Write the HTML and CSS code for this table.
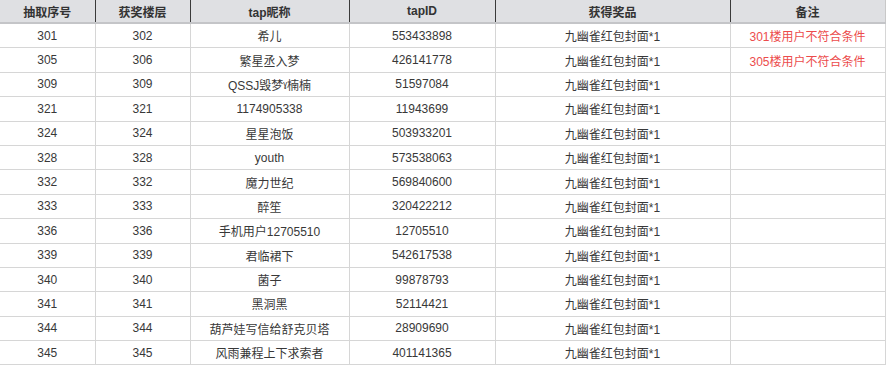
FILE: index.html
```html
<!DOCTYPE html>
<html lang="zh-CN">
<head>
    <meta charset="UTF-8">
    <meta name="viewport" content="width=device-width, initial-scale=1.0">
    <title>获奖名单</title>
    <link rel="stylesheet" href="styles.css">
</head>
<body>
    <table class="prize-table">
        <colgroup>
            <col class="col-no">
            <col class="col-floor">
            <col class="col-name">
            <col class="col-id">
            <col class="col-prize">
            <col class="col-note">
        </colgroup>
        <thead>
            <tr>
                <th>抽取序号</th>
                <th>获奖楼层</th>
                <th>tap昵称</th>
                <th>tapID</th>
                <th>获得奖品</th>
                <th>备注</th>
            </tr>
        </thead>
        <tbody>
            <tr><td>301</td><td>302</td><td>希儿</td><td>553433898</td><td>九幽雀红包封面*1</td><td class="note-warn">301楼用户不符合条件</td></tr>
            <tr><td>305</td><td>306</td><td>繁星丞入梦</td><td>426141778</td><td>九幽雀红包封面*1</td><td class="note-warn">305楼用户不符合条件</td></tr>
            <tr><td>309</td><td>309</td><td>QSSJ毁梦ˠ楠楠</td><td>51597084</td><td>九幽雀红包封面*1</td><td></td></tr>
            <tr><td>321</td><td>321</td><td>1174905338</td><td>11943699</td><td>九幽雀红包封面*1</td><td></td></tr>
            <tr><td>324</td><td>324</td><td>星星泡饭</td><td>503933201</td><td>九幽雀红包封面*1</td><td></td></tr>
            <tr><td>328</td><td>328</td><td>youth</td><td>573538063</td><td>九幽雀红包封面*1</td><td></td></tr>
            <tr><td>332</td><td>332</td><td>魔力世纪</td><td>569840600</td><td>九幽雀红包封面*1</td><td></td></tr>
            <tr><td>333</td><td>333</td><td>醉笙</td><td>320422212</td><td>九幽雀红包封面*1</td><td></td></tr>
            <tr><td>336</td><td>336</td><td>手机用户12705510</td><td>12705510</td><td>九幽雀红包封面*1</td><td></td></tr>
            <tr><td>339</td><td>339</td><td>君临裙下</td><td>542617538</td><td>九幽雀红包封面*1</td><td></td></tr>
            <tr><td>340</td><td>340</td><td>菌子</td><td>99878793</td><td>九幽雀红包封面*1</td><td></td></tr>
            <tr><td>341</td><td>341</td><td>黑洞黑</td><td>52114421</td><td>九幽雀红包封面*1</td><td></td></tr>
            <tr><td>344</td><td>344</td><td>葫芦娃写信给舒克贝塔</td><td>28909690</td><td>九幽雀红包封面*1</td><td></td></tr>
            <tr><td>345</td><td>345</td><td>风雨兼程上下求索者</td><td>401141365</td><td>九幽雀红包封面*1</td><td></td></tr>
        </tbody>
    </table>
</body>
</html>
```

FILE: styles.css
```css
body {
    margin: 0;
    background: #ffffff;
    font-family: "Liberation Sans", "Noto Sans CJK SC", sans-serif;
    font-size: 12px;
    color: #383838;
}

/* Prize table */
.prize-table {
    width: 885px;
    table-layout: fixed;
    border-collapse: collapse;
}

.col-no { width: 95px; }
.col-floor { width: 95px; }
.col-name { width: 159px; }
.col-id { width: 146px; }
.col-prize { width: 235px; }
.col-note { width: 155px; }

.prize-table th {
    height: 22px;
    padding: 0;
    background: #dfe0e3;
    border-right: 1px solid #3a3a3a;
    border-bottom: 2px solid #c4c5c8;
    font-weight: bold;
    color: #333;
    text-align: center;
}

.prize-table th:last-child {
    border-right: 1px solid #c8c8c8;
}

.prize-table td {
    height: 23.4px;
    padding: 0;
    border-right: 1px solid #d6d6d6;
    border-bottom: 1px solid #d6d6d6;
    text-align: center;
    white-space: nowrap;
}

.note-warn {
    color: #ec4c4c;
}
```
